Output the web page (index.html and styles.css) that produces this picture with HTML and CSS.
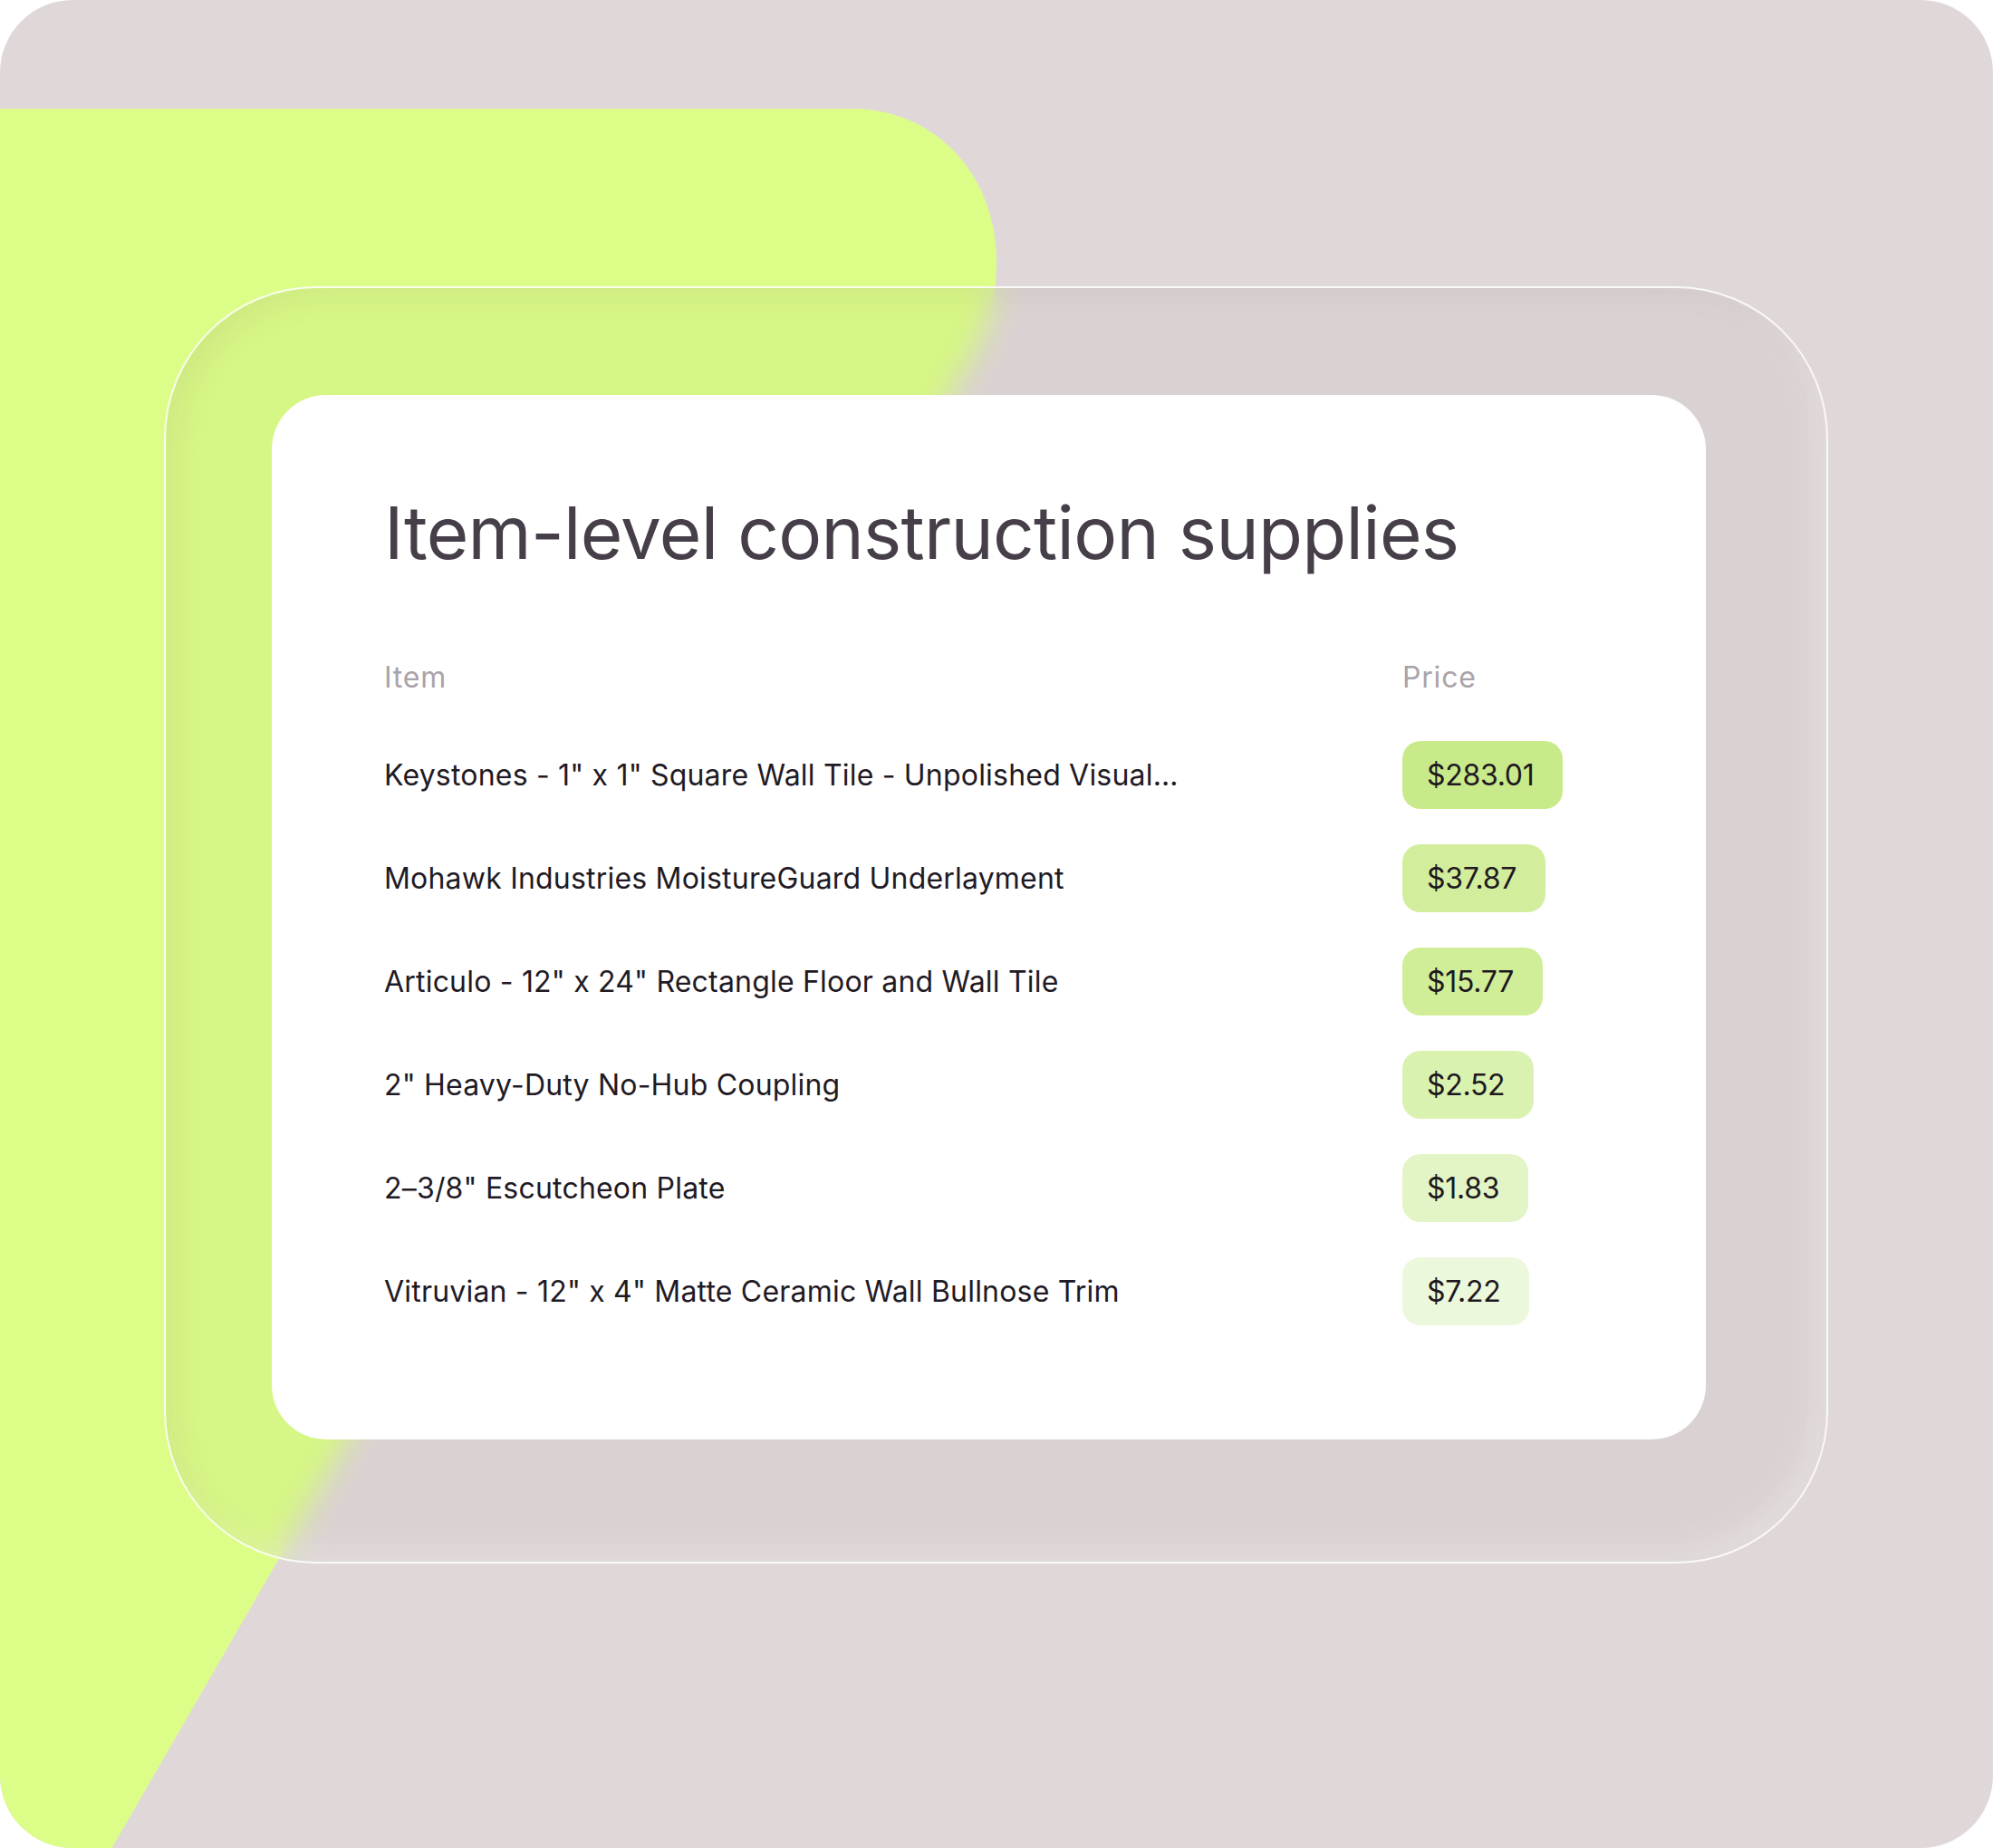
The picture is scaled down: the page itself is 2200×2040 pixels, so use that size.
FILE: index.html
```html
<!DOCTYPE html>
<html lang="en">
<head>
<meta charset="utf-8">
<title>Item-level construction supplies</title>
<link rel="stylesheet" href="styles.css">
</head>
<body>
<div class="frame">
  <svg class="blob" width="2200" height="2040" viewBox="0 0 2200 2040" aria-hidden="true">
    <path d="M0 120 H940 C1030 120 1100 190 1100 290 C1100 330 1091 360 1076 390 L112 2060 H0 Z" fill="#dcfe88"/>
  </svg>
  <div class="glass">
    <div class="card">
      <h1 class="title">Item-level construction supplies</h1>
      <div class="table">
        <div class="th">Item</div>
        <div class="th">Price</div>

        <div class="cell name">Keystones - 1" x 1" Square Wall Tile - Unpolished Visual…</div>
        <div class="cell"><span class="price p1">$283.01</span></div>

        <div class="cell name">Mohawk Industries MoistureGuard Underlayment</div>
        <div class="cell"><span class="price p2">$37.87</span></div>

        <div class="cell name">Articulo - 12" x 24" Rectangle Floor and Wall Tile</div>
        <div class="cell"><span class="price p3">$15.77</span></div>

        <div class="cell name">2" Heavy-Duty No-Hub Coupling</div>
        <div class="cell"><span class="price p4">$2.52</span></div>

        <div class="cell name">2–3/8" Escutcheon Plate</div>
        <div class="cell"><span class="price p5">$1.83</span></div>

        <div class="cell name">Vitruvian - 12" x 4" Matte Ceramic Wall Bullnose Trim</div>
        <div class="cell"><span class="price p6">$7.22</span></div>
      </div>
    </div>
  </div>
</div>
</body>
</html>
```

FILE: styles.css
```css
* { box-sizing: border-box; }

html, body {
  margin: 0;
  padding: 0;
  background: #ffffff;
}

body {
  font-family: Inter, "Noto Sans", "DejaVu Sans", sans-serif;
}

.frame {
  position: relative;
  width: 2200px;
  height: 2040px;
  border-radius: 80px;
  background: #e0d8d8;
  overflow: hidden;
  padding: 316px 0 0 181px;
}

.blob {
  position: absolute;
  left: 0;
  top: 0;
  z-index: 0;
}

.glass {
  position: relative;
  z-index: 1;
  width: 1837px;
  height: 1410px;
  border-radius: 168px;
  border: 2px solid rgba(255, 255, 255, 0.85);
  background: rgba(120, 90, 100, 0.05);
  -webkit-backdrop-filter: blur(16px);
  backdrop-filter: blur(16px);
  box-shadow: inset 14px 10px 40px -10px rgba(90, 80, 60, 0.10),
              inset -14px -14px 40px -10px rgba(255, 255, 255, 0.35);
  padding: 118px 0 0 117px;
}

.card {
  width: 1583px;
  height: 1153px;
  background: #ffffff;
  border-radius: 60px;
  padding: 104px 0 0 124px;
}

.title {
  margin: 0;
  font-size: 80px;
  line-height: 96px;
  font-weight: 400;
  color: #463e48;
  letter-spacing: -0.7px;
}

.table {
  margin-top: 94px;
  display: grid;
  grid-template-columns: 1124px auto;
  grid-auto-rows: 114px;
  grid-template-rows: 68px;
  align-items: center;
}

.th {
  align-self: start;
  font-size: 32px;
  line-height: 36px;
  color: #a9a3a9;
  letter-spacing: 0.8px;
}

.cell {
  display: flex;
  align-items: center;
}

.name {
  font-size: 32px;
  color: #1f1a24;
  letter-spacing: 0.2px;
  white-space: nowrap;
}

.price {
  display: inline-flex;
  align-items: center;
  height: 75px;
  padding: 0 32px 0 27px;
  border-radius: 20px;
  font-size: 32px;
  color: #1e1820;
  letter-spacing: -0.3px;
}

.p1 { background: #c9ea8a; }
.p2 { background: #d2ee9c; }
.p3 { background: #d0ed97; }
.p4 { background: #daf2af; }
.p5 { background: #e3f5c6; }
.p6 { background: #ecf8dc; }
```
